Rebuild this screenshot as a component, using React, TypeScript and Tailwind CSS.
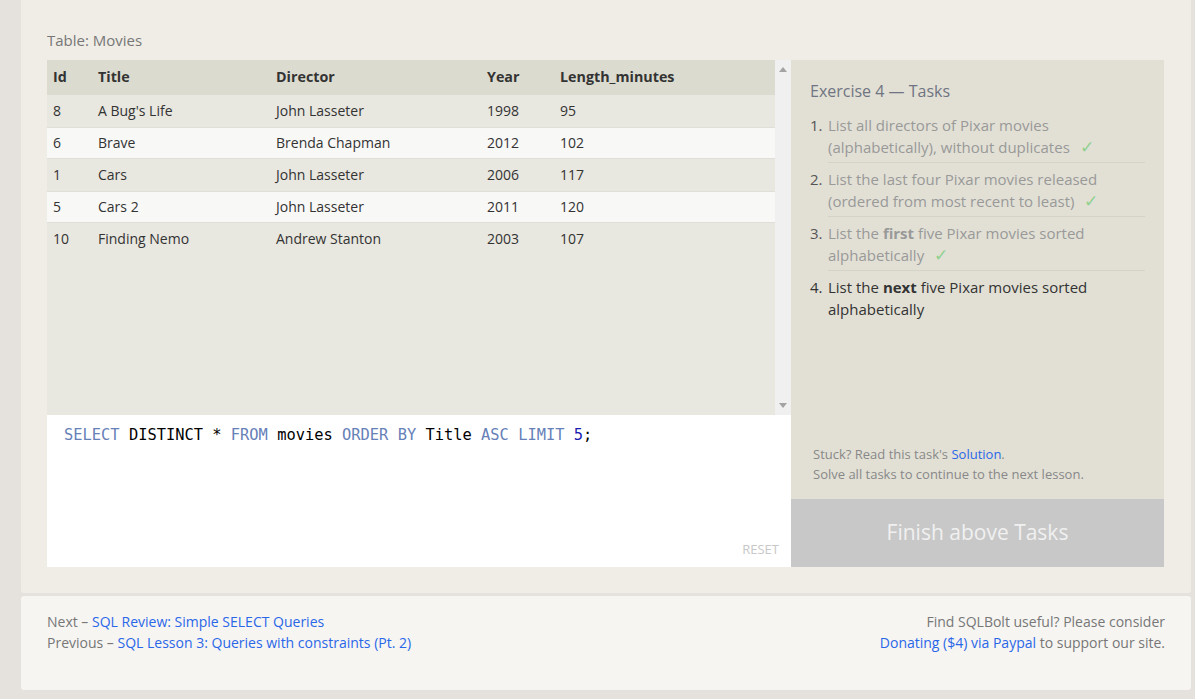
import React from 'react'

const font = { fontFamily: '"Open Sans", "Noto Sans", Arial, sans-serif' }

// ─── Data ─────────────────────────────────────────────────────────────────────

const rows = [
  { id: 8, title: "A Bug's Life", director: 'John Lasseter', year: 1998, len: 95 },
  { id: 6, title: 'Brave', director: 'Brenda Chapman', year: 2012, len: 102 },
  { id: 1, title: 'Cars', director: 'John Lasseter', year: 2006, len: 117 },
  { id: 5, title: 'Cars 2', director: 'John Lasseter', year: 2011, len: 120 },
  { id: 10, title: 'Finding Nemo', director: 'Andrew Stanton', year: 2003, len: 107 },
]

// ─── Table ────────────────────────────────────────────────────────────────────

function MoviesTable() {
  return (
    <div className="flex h-[355px] bg-[#e8e7e0]">
      <div className="flex-1">
        <div className="flex h-[35px] items-center bg-[#dcdbd0] text-[14.3px] font-bold text-[#333]">
          <div className="w-[51px] pl-[6px]">Id</div>
          <div className="w-[178px]">Title</div>
          <div className="w-[211px]">Director</div>
          <div className="w-[73px]">Year</div>
          <div>Length_minutes</div>
        </div>
        {rows.map((r, i) => (
          <div
            key={r.id}
            className={
              'flex h-[32px] items-center text-[14px] text-[#333] ' +
              (i % 2 === 1 ? 'bg-[#f8f8f6] border-y border-[#dfded8]' : 'bg-[#e8e7e0]')
            }
          >
            <div className="w-[51px] pl-[6px]">{r.id}</div>
            <div className="w-[178px]">{r.title}</div>
            <div className="w-[211px]">{r.director}</div>
            <div className="w-[73px]">{r.year}</div>
            <div>{r.len}</div>
          </div>
        ))}
      </div>
      <div className="flex w-[16px] flex-col items-center justify-between bg-[#f0f0f0] py-[7px]">
        <svg width="8" height="5" viewBox="0 0 8 5"><path d="M4 0L8 5H0z" fill="#a3a3a3" /></svg>
        <svg width="8" height="5" viewBox="0 0 8 5"><path d="M0 0H8L4 5z" fill="#a3a3a3" /></svg>
      </div>
    </div>
  )
}

// ─── Editor ───────────────────────────────────────────────────────────────────

function Editor() {
  const kw = 'text-[#6680b8]'
  return (
    <div className="relative flex h-[152px] bg-white">
      <div
        className="flex-1 px-[17px] pt-[9px] text-[15.4px] text-black"
        style={{ fontFamily: '"DejaVu Sans Mono", "Liberation Mono", monospace' }}
      >
        <span className={kw}>SELECT</span> DISTINCT * <span className={kw}>FROM</span> movies{' '}
        <span className={kw}>ORDER BY</span> Title <span className={kw}>ASC</span>{' '}
        <span className={kw}>LIMIT</span> <span className="text-[#1a1ab0]">5</span>;
      </div>
      <div className="absolute right-[12px] bottom-[7px] text-[13px] text-[#c8c8c8]">RESET</div>
    </div>
  )
}

// ─── Tasks ────────────────────────────────────────────────────────────────────

function Check() {
  return <span className="ml-[10px] text-[17px] leading-none text-[#8fd18f]">✓</span>
}

function Tasks() {
  return (
    <div className="flex w-[373px] flex-col bg-[#e2e0d5]">
      <div className="flex-1 px-[19px] pt-[19px]">
        <div className="text-[16px] text-[#707482]">Exercise 4 — Tasks</div>
        <ol className="mt-[11px] text-[15px] leading-[22px]">
          <li className="flex">
            <span className="w-[18px] shrink-0 text-[#555]">1.</span>
            <div className="flex-1 border-b border-[#d5d3c8] pb-[4px] text-[#999]">
              List all directors of Pixar movies (alphabetically), without duplicates
              <Check />
            </div>
          </li>
          <li className="mt-[5px] flex">
            <span className="w-[18px] shrink-0 text-[#555]">2.</span>
            <div className="flex-1 border-b border-[#d5d3c8] pb-[4px] text-[#999]">
              List the last four Pixar movies released (ordered from most recent to least)
              <Check />
            </div>
          </li>
          <li className="mt-[5px] flex">
            <span className="w-[18px] shrink-0 text-[#555]">3.</span>
            <div className="flex-1 border-b border-[#d5d3c8] pb-[4px] text-[#999]">
              List the <b>first</b> five Pixar movies sorted alphabetically
              <Check />
            </div>
          </li>
          <li className="mt-[5px] flex text-[#333]">
            <span className="w-[18px] shrink-0">4.</span>
            <div className="flex-1">
              List the <b>next</b> five Pixar movies sorted alphabetically
            </div>
          </li>
        </ol>
      </div>
      <div className="px-[22px] pb-[15px] text-[13px] leading-[20px] text-[#888]">
        <div>
          Stuck? Read this task's <span className="text-[#2a67e8]">Solution</span>.
        </div>
        <div>Solve all tasks to continue to the next lesson.</div>
      </div>
      <div className="flex h-[68px] items-center justify-center bg-[#c8c8c8] text-[21px] text-[#f0f0f0]">
        Finish above Tasks
      </div>
    </div>
  )
}

// ─── Page ─────────────────────────────────────────────────────────────────────

export default function App() {
  return (
    <div className="min-h-[699px] bg-[#e5e1dd] pl-[21px] pr-[4px]" style={font}>
      <div className="rounded-b-[3px] bg-[#efede6] px-[26px] pt-[29px] pb-[26px]">
        <div className="mb-[8px] text-[15px] text-[#777]">Table: Movies</div>
        <div className="flex w-[1117px]">
          <div className="w-[744px]">
            <MoviesTable />
            <Editor />
          </div>
          <Tasks />
        </div>
      </div>
      <div className="mt-[3px] flex h-[94px] justify-between rounded-[3px] bg-[#f6f5f2] px-[26px] pt-[15px] text-[14px] leading-[21px] text-[#777]">
        <div>
          <div>
            Next – <span className="text-[#2a67e8]">SQL Review: Simple SELECT Queries</span>
          </div>
          <div>
            Previous – <span className="text-[#2a67e8]">SQL Lesson 3: Queries with constraints (Pt. 2)</span>
          </div>
        </div>
        <div className="text-right">
          <div>Find SQLBolt useful? Please consider</div>
          <div>
            <span className="text-[#2a67e8]">Donating ($4) via Paypal</span> to support our site.
          </div>
        </div>
      </div>
    </div>
  )
}
